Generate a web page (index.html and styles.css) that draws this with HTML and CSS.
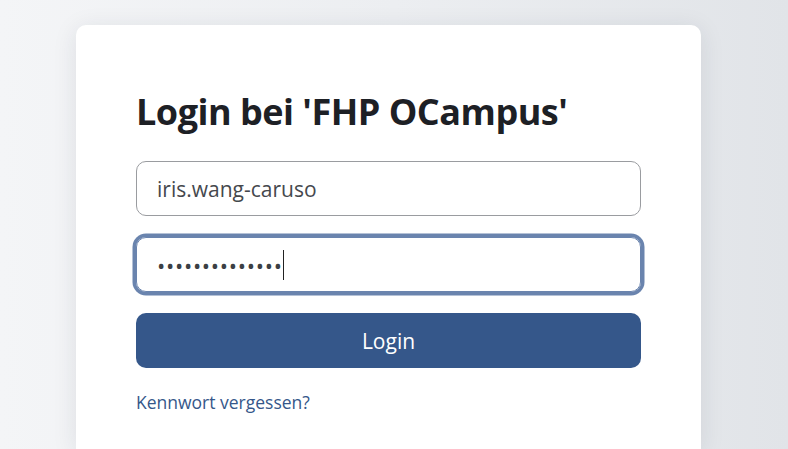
FILE: index.html
```html
<!DOCTYPE html>
<html lang="de">
<head>
<meta charset="utf-8">
<title>Login</title>
<link rel="stylesheet" href="styles.css">
</head>
<body>
<main class="card">
  <h1 class="title">Login bei 'FHP OCampus'</h1>
  <div class="field">iris.wang-caruso</div>
  <div class="field focus"><span class="dots">••••••••••••••</span><span class="caret"></span></div>
  <button class="btn">Login</button>
  <a class="link" href="#">Kennwort vergessen?</a>
</main>
</body>
</html>
```
FILE: styles.css
```css
html, body { margin: 0; height: 100%; }
body {
  background: linear-gradient(90deg, #f4f5f7 0%, #eceef1 50%, #e1e4e8 100%);
  font-family: "Open Sans", "Noto Sans", sans-serif;
  overflow: hidden;
}
.card {
  margin: 25px 0 0 76px;
  width: 625px;
  box-sizing: border-box;
  height: calc(100vh - 25px);
  background: #fff;
  border-radius: 10px 10px 0 0;
  box-shadow: 0 4px 24px rgba(30, 40, 60, 0.10);
  padding: 62px 60px 0 60px;
  display: flex;
  flex-direction: column;
}
.title {
  margin: 0 0 24px 0;
  font-size: 36px;
  line-height: 50px;
  font-weight: 700;
  color: #1d2025;
  letter-spacing: -0.5px;
}
.field {
  height: 55px;
  box-sizing: border-box;
  border: 1px solid #9a9ca0;
  border-radius: 10px;
  padding: 0 20px;
  display: flex;
  align-items: center;
  font-size: 21px;
  color: #45484d;
  margin-bottom: 21px;
}
.field.focus {
  border-color: #6a84ae;
  box-shadow: 0 0 0 3.5px #6a84ae;
}
.dots { letter-spacing: 0.7px; font-size: 22px; color: #3c3f44; }
.caret {
  display: inline-block;
  width: 1px;
  height: 30px;
  background: #222;
  margin-left: 0;
}
.btn {
  height: 55px;
  border: 0;
  border-radius: 10px;
  background: #35578a;
  color: #fff;
  font-family: inherit;
  font-size: 21px;
  padding: 0;
}
.link {
  margin-top: 22px;
  font-size: 17.5px;
  color: #35578a;
  text-decoration: none;
}
```
